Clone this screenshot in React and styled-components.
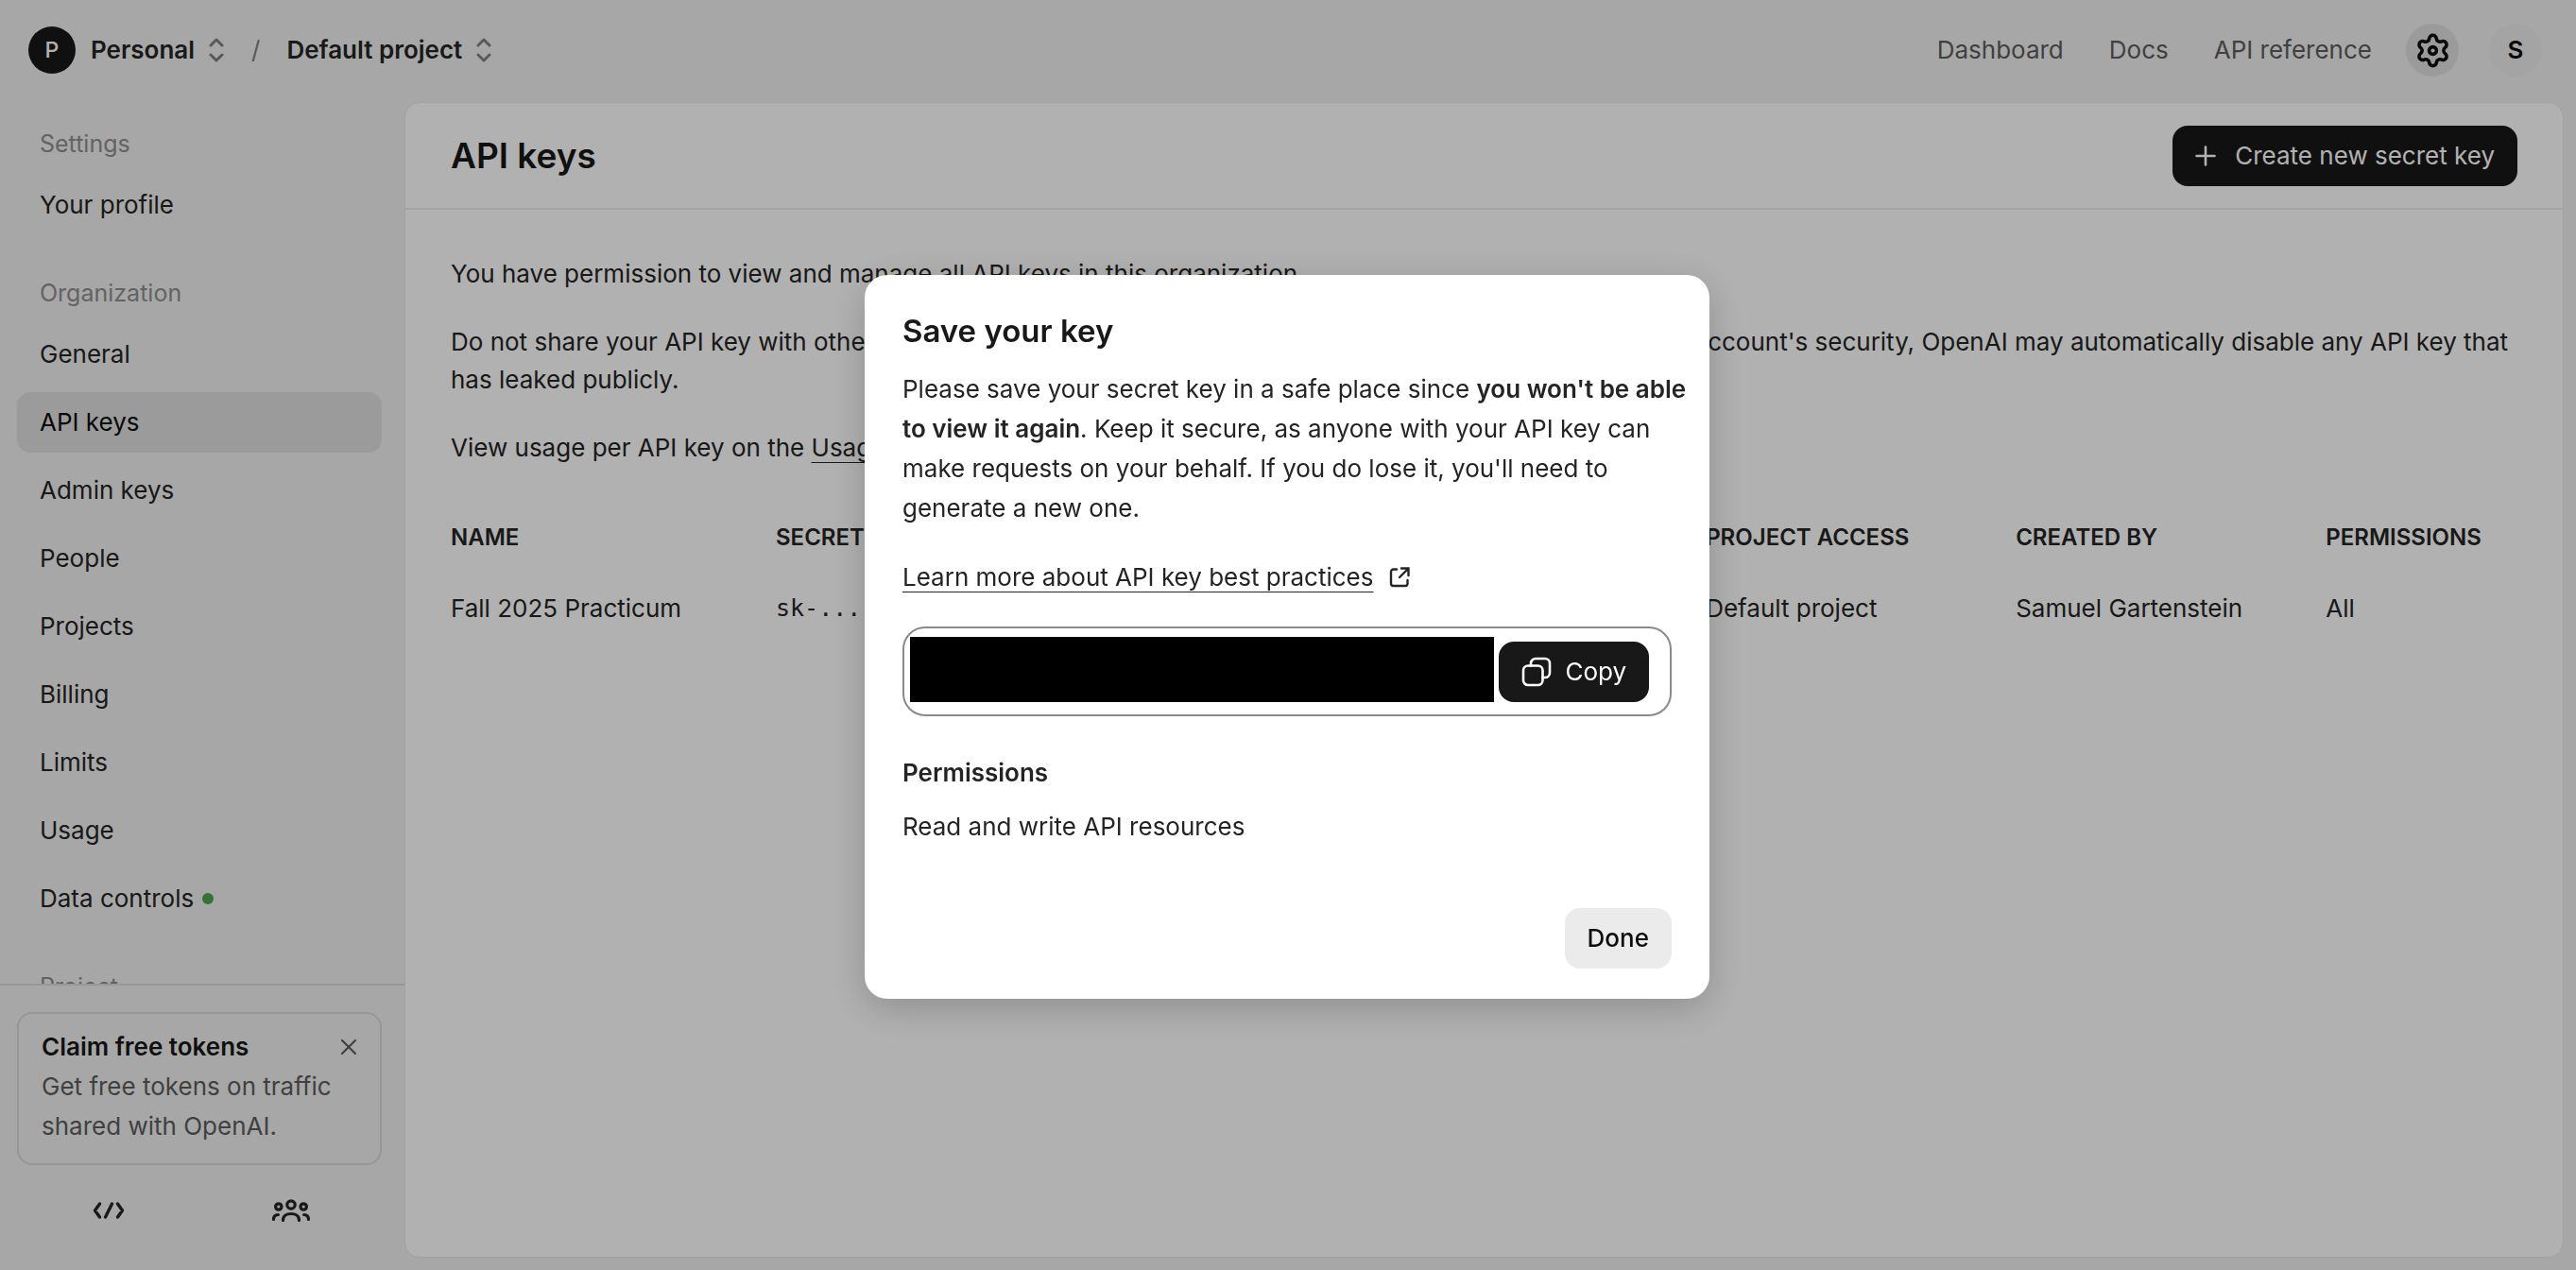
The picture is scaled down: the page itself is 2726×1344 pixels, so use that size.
import React from "react";
import styled, { createGlobalStyle } from "styled-components";

const GlobalStyle = createGlobalStyle`
  * { box-sizing: border-box; }
  body {
    margin: 0;
    background: #f1f1f1;
    color: #242424;
    font-family: Inter, "Noto Sans", sans-serif;
    font-size: 26px;
    line-height: 40px;
  }
  h1, h2, h3, p, ul { margin: 0; padding: 0; }
  ul { list-style: none; }
  a { color: inherit; text-decoration: none; }
  b { font-weight: 600; }
  button {
    margin: 0;
    padding: 0;
    border: 0;
    background: none;
    color: inherit;
    font: inherit;
    cursor: pointer;
  }
  svg { display: block; flex: none; }
`;

const Page = styled.div`
  display: grid;
  grid-template: 108px minmax(0, 1fr) / 428px minmax(0, 1fr);
  height: 100vh;
  overflow: hidden;
`;

const TopBar = styled.header`
  grid-column: 1 / -1;
  display: flex;
  align-items: center;
  justify-content: space-between;
  padding: 0 36px 2px 30px;
`;

const Crumbs = styled.div`
  display: flex;
  align-items: center;
  gap: 28px;
`;

const Switcher = styled.button`
  display: flex;
  align-items: center;
  gap: 14px;
  font-weight: 600;
`;

const Slash = styled.span`
  color: #808080;
`;

const Avatar = styled.span`
  display: grid;
  place-items: center;
  width: 50px;
  height: 50px;
  margin-right: 2px;
  border-radius: 50%;
  background: #181818;
  color: #fff;
  font-size: 23px;
  font-weight: 500;
`;

const TopNav = styled.nav`
  display: flex;
  align-items: center;
  color: #5d5d5d;
`;

const TopLinks = styled.div`
  display: flex;
  gap: 48px;
  margin-right: 36px;
`;

const RoundButton = styled.button`
  display: grid;
  place-items: center;
  width: 56px;
  height: 56px;
  margin-left: ${(p) => (p.$spaced ? "32px" : "0")};
  border-radius: 50%;
  background: ${(p) => (p.$active ? "#dfdfdf" : "#ececec")};
  color: #0d0d0d;
  font-weight: 600;
`;

const Sidebar = styled.aside`
  display: flex;
  flex-direction: column;
  min-height: 0;
`;

const NavScroll = styled.nav`
  flex: 1;
  min-height: 0;
  overflow: hidden;
  padding: 11px 24px 0 18px;
`;

const NavGroup = styled.section`
  margin-bottom: 28px;
`;

const NavHeading = styled.h3`
  padding: 0 24px;
  color: #8f8f8f;
  font-size: 25px;
  font-weight: 400;
  line-height: 66px;
`;

const NavList = styled.ul`
  display: flex;
  flex-direction: column;
  gap: 8px;
`;

const NavLink = styled.a`
  display: flex;
  align-items: center;
  gap: 9px;
  height: 64px;
  padding: 0 24px;
  border-radius: 14px;
  background: ${(p) => (p.$active ? "#dfdfdf" : "transparent")};
  color: ${(p) => (p.$active ? "#0d0d0d" : "#242424")};
`;

const Dot = styled.span`
  width: 12px;
  height: 12px;
  border-radius: 50%;
  background: #4ca64c;
`;

const SideFooter = styled.div`
  display: flex;
  flex-direction: column;
  gap: 20px;
  padding: 28px 24px 35px 18px;
  border-top: 2px solid #dadada;
`;

const Promo = styled.section`
  padding: 14px 24px 18px;
  border: 2px solid #d9d9d9;
  border-radius: 16px;
  line-height: 42px;
`;

const PromoTop = styled.div`
  display: flex;
  align-items: center;
  justify-content: space-between;
  color: #5d5d5d;
`;

const PromoTitle = styled.h3`
  color: #181818;
  font-size: 26px;
  font-weight: 600;
`;

const PromoText = styled.p`
  color: #5d5d5d;
`;

const FooterIcons = styled.div`
  display: grid;
  grid-template-columns: 1fr 1fr;
  justify-items: center;
  height: 56px;
  align-items: center;
`;

const Panel = styled.main`
  min-width: 0;
  margin: 0 13px 13px 0;
  border: 1px solid #e9e9e9;
  border-radius: 16px;
  background: #fff;
`;

const PanelHeader = styled.div`
  display: flex;
  align-items: center;
  justify-content: space-between;
  height: 113px;
  padding: 0 48px;
  border-bottom: 2px solid #ededed;
`;

const PageTitle = styled.h1`
  color: #181818;
  font-size: 37px;
  font-weight: 600;
`;

const DarkButton = styled.button`
  display: flex;
  align-items: center;
  gap: ${(p) => (p.$wide ? "20px" : "14px")};
  height: 64px;
  padding: 0 24px;
  border-radius: 16px;
  background: #181818;
  color: #fff;
`;

const PanelBody = styled.div`
  display: flex;
  flex-direction: column;
  gap: 32px;
  padding: 48px;
`;

const TextLink = styled.a`
  text-decoration: underline;
  text-decoration-thickness: 1px;
  text-underline-offset: 6px;
`;

const KeyTable = styled.table`
  width: 100%;
  margin-top: 23px;
  border-collapse: collapse;
  table-layout: fixed;

  th, td {
    padding: 0;
    text-align: left;
    white-space: nowrap;
  }
  th {
    height: 74px;
    font-size: 24px;
    font-weight: 600;
    vertical-align: top;
  }
`;

const Mono = styled.span`
  font-family: "DejaVu Sans Mono", monospace;
  font-size: 25px;
`;

const Overlay = styled.div`
  position: fixed;
  inset: 0;
  display: grid;
  place-items: center;
  padding: 4px 2px 0 0;
  background: rgba(0, 0, 0, 0.305);
`;

const Dialog = styled.section`
  display: flex;
  flex-direction: column;
  width: 894px;
  padding: 38px 40px 32px;
  border-radius: 24px;
  background: #fff;
  box-shadow: 0 10px 40px rgba(0, 0, 0, 0.2);
  line-height: 42px;
`;

const DialogTitle = styled.h2`
  margin-bottom: 20px;
  color: #181818;
  font-size: 33px;
  font-weight: 600;
`;

const Notice = styled.p`
  margin-right: -20px;
`;

const LearnMore = styled.p`
  display: flex;
  align-items: center;
  gap: 16px;
  margin: 31px 0;
`;

const KeyBox = styled.div`
  display: flex;
  align-items: center;
  justify-content: space-between;
  gap: 5px;
  height: 95px;
  padding: 0 22px 0 6px;
  border: 2px solid #8a8a8a;
  border-radius: 24px;
`;

const KeyInput = styled.input`
  flex: 1;
  min-width: 0;
  height: 69px;
  margin-bottom: 4px;
  padding: 0;
  border: 0;
  border-radius: 0;
  background: #000;
`;

const SectionTitle = styled.h3`
  margin: 39px 0 15px;
  font-size: 26px;
  font-weight: 600;
`;

const Done = styled.button`
  align-self: flex-end;
  height: 64px;
  margin-top: 65px;
  padding: 0 24px;
  border-radius: 16px;
  background: #ebebeb;
  color: #0d0d0d;
  font-weight: 500;
`;

const Icon = ({ w, h, box, stroke = 2, children }) => (
  <svg
    width={w}
    height={h}
    viewBox={box}
    fill="none"
    stroke="currentColor"
    strokeWidth={stroke}
    strokeLinecap="round"
    strokeLinejoin="round"
    aria-hidden="true"
  >
    {children}
  </svg>
);

const Chevrons = () => (
  <Icon w={18} h={26} box="0 0 18 26" stroke={3}>
    <g stroke="#808080">
      <path d="M3 8l6-6 6 6M3 18l6 6 6-6" />
    </g>
  </Icon>
);

const Gear = () => (
  <Icon w={39} h={39} box="0 0 24 24" stroke={2.2}>
    <path d="M9.671 4.136a2.34 2.34 0 0 1 4.659 0 2.34 2.34 0 0 0 3.319 1.915 2.34 2.34 0 0 1 2.33 4.033 2.34 2.34 0 0 0 0 3.831 2.34 2.34 0 0 1-2.33 4.033 2.34 2.34 0 0 0-3.319 1.915 2.34 2.34 0 0 1-4.659 0 2.34 2.34 0 0 0-3.32-1.915 2.34 2.34 0 0 1-2.33-4.033 2.34 2.34 0 0 0 0-3.831A2.34 2.34 0 0 1 6.35 6.051a2.34 2.34 0 0 0 3.319-1.915" />
    <circle cx="12" cy="12" r="2.4" />
  </Icon>
);

const Code = () => (
  <Icon w={36} h={20} box="0 0 36 20" stroke={3.4}>
    <path d="M8.500 3L3.500 10l5 7M27.500 3L32.500 10l-5 7M21.500 3l-7 14" />
  </Icon>
);

const People = () => (
  <Icon w={42} h={26} box="0 0 42 26" stroke={3.2}>
    <circle cx="21" cy="7" r="4.200" />
    <circle cx="7.800" cy="9" r="3.200" />
    <circle cx="34.200" cy="9" r="3.200" />
    <path d="M12.500 23.500c0-4.500 3.500-7 8.500-7s8.500 2.500 8.500 7M2.500 22.500c0-3 1.800-4.800 4.800-5M39.500 22.500c0-3-1.800-4.800-4.800-5" />
  </Icon>
);

const Plus = () => (
  <Icon w={22} h={22} box="0 0 22 22" stroke={2.6}>
    <path d="M11 1.500v19M1.500 11h19" />
  </Icon>
);

const Close = () => (
  <Icon w={18} h={18} box="0 0 18 18" stroke={2.2}>
    <path d="M2 2l14 14M16 2L2 16" />
  </Icon>
);

const External = () => (
  <Icon w={22} h={22} box="0 0 22 22" stroke={2.4}>
    <path d="M8 2.500H4.500A2.500 2.500 0 0 0 2 5v12.500A2.500 2.500 0 0 0 4.500 20H17a2.500 2.500 0 0 0 2.500-2.500V14" />
    <path d="M13 1.500h7.500V9M20 2l-9 9" strokeLinejoin="miter" />
  </Icon>
);

const Copy = () => (
  <Icon w={32} h={32} box="0 0 32 32" stroke={2.6}>
    <rect x="2" y="9.500" width="20.500" height="20.500" rx="5" />
    <path d="M10 9.500V7a5 5 0 0 1 5-5h10a5 5 0 0 1 5 5v10a5 5 0 0 1-5 5h-2.500" />
  </Icon>
);

const organization = [
  "General",
  "API keys",
  "Admin keys",
  "People",
  "Projects",
  "Billing",
  "Limits",
  "Usage",
  "Data controls",
];

const columns = [
  { title: "Name", width: "15.73%" },
  { title: "Secret key", width: "15%" },
  { title: "Created", width: "15%" },
  { title: "Last used", width: "15%" },
  { title: "Project access", width: "15%" },
  { title: "Created by", width: "15%" },
  { title: "Permissions", width: "9.27%" },
];

export default function App() {
  return (
    <>
      <GlobalStyle />
      <Page>
        <TopBar>
          <Crumbs>
            <Switcher>
              <Avatar>P</Avatar>
              Personal
              <Chevrons />
            </Switcher>
            <Slash>/</Slash>
            <Switcher>
              Default project
              <Chevrons />
            </Switcher>
          </Crumbs>
          <TopNav>
            <TopLinks>
              <a href="#dashboard">Dashboard</a>
              <a href="#docs">Docs</a>
              <a href="#reference">API reference</a>
            </TopLinks>
            <RoundButton $active aria-label="Settings">
              <Gear />
            </RoundButton>
            <RoundButton $spaced>S</RoundButton>
          </TopNav>
        </TopBar>

        <Sidebar>
          <NavScroll>
            <NavGroup>
              <NavHeading>Settings</NavHeading>
              <NavList>
                <li>
                  <NavLink href="#profile">Your profile</NavLink>
                </li>
              </NavList>
            </NavGroup>
            <NavGroup>
              <NavHeading>Organization</NavHeading>
              <NavList>
                {organization.map((name) => (
                  <li key={name}>
                    <NavLink href="#nav" $active={name === "API keys"}>
                      {name}
                      {name === "Data controls" && <Dot />}
                    </NavLink>
                  </li>
                ))}
              </NavList>
            </NavGroup>
            <NavGroup>
              <NavHeading>Project</NavHeading>
            </NavGroup>
          </NavScroll>
          <SideFooter>
            <Promo>
              <PromoTop>
                <PromoTitle>Claim free tokens</PromoTitle>
                <button aria-label="Dismiss">
                  <Close />
                </button>
              </PromoTop>
              <PromoText>Get free tokens on traffic shared with OpenAI.</PromoText>
            </Promo>
            <FooterIcons>
              <button aria-label="Developers">
                <Code />
              </button>
              <button aria-label="Community">
                <People />
              </button>
            </FooterIcons>
          </SideFooter>
        </Sidebar>

        <Panel>
          <PanelHeader>
            <PageTitle>API keys</PageTitle>
            <DarkButton $wide>
              <Plus />
              Create new secret key
            </DarkButton>
          </PanelHeader>
          <PanelBody>
            <p>You have permission to view and manage all API keys in this organization.</p>
            <p>
              Do not share your API key with others or expose it in the browser or other
              client-side code. To protect your account's security, OpenAI may automatically
              disable any API key that has leaked publicly.
            </p>
            <p>
              View usage per API key on the <TextLink href="#usage">Usage page</TextLink>.
            </p>
            <KeyTable>
              <colgroup>
                {columns.map((c) => (
                  <col key={c.title} style={{ width: c.width }} />
                ))}
              </colgroup>
              <thead>
                <tr>
                  {columns.map((c) => (
                    <th key={c.title} scope="col">
                      {c.title.toUpperCase()}
                    </th>
                  ))}
                </tr>
              </thead>
              <tbody>
                <tr>
                  <td>Fall 2025 Practicum</td>
                  <td>
                    <Mono>sk-...</Mono>
                  </td>
                  <td />
                  <td />
                  <td>Default project</td>
                  <td>Samuel Gartenstein</td>
                  <td>All</td>
                </tr>
              </tbody>
            </KeyTable>
          </PanelBody>
        </Panel>
      </Page>

      <Overlay>
        <Dialog role="dialog" aria-modal="true" aria-labelledby="save-title">
          <DialogTitle id="save-title">Save your key</DialogTitle>
          <Notice>
            Please save your secret key in a safe place since{" "}
            <b>you won't be able to view it again</b>. Keep it secure, as anyone with your
            API key can make requests on your behalf. If you do lose it, you'll need to
            generate a new one.
          </Notice>
          <LearnMore>
            <TextLink href="#practices">Learn more about API key best practices</TextLink>
            <External />
          </LearnMore>
          <KeyBox>
            <KeyInput type="text" readOnly aria-label="Secret key" />
            <DarkButton>
              <Copy />
              Copy
            </DarkButton>
          </KeyBox>
          <SectionTitle>Permissions</SectionTitle>
          <p>Read and write API resources</p>
          <Done>Done</Done>
        </Dialog>
      </Overlay>
    </>
  );
}
